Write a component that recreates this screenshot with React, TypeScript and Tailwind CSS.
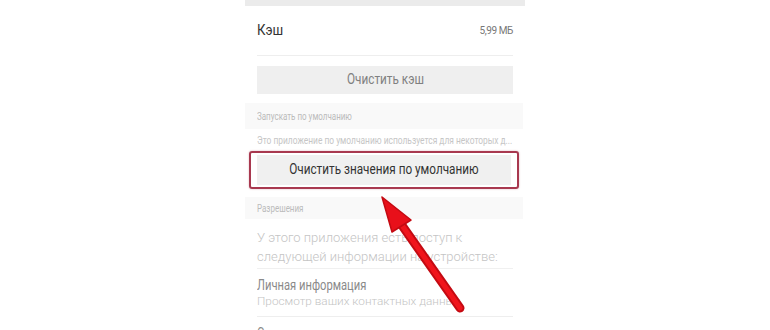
import React from "react";

export default function App() {
  const f = { fontFamily: "Roboto, 'Noto Sans', sans-serif" };
  return (
    <div className="relative w-[770px] h-[330px] overflow-hidden bg-white" style={f}>
      <div className="mx-auto w-[280px] flex flex-col">
        <div className="h-[6px] bg-[#ebebeb]" />
        <div className="h-[49px] flex items-center justify-between px-3">
          <span className="inline-block origin-left scale-x-[0.88] text-[15px] text-[#333]">Кэш</span>
          <span className="text-[10px] text-[#777] tracking-[-0.4px]">5,99 МБ</span>
        </div>
        <div className="mx-3 border-t border-[#eeeeee]" />
        <div className="h-[10px]" />
        <div className="mx-3 h-[28px] bg-[#efefef] flex items-center justify-center text-[14.5px] text-[#808080]">
          <span className="inline-block scale-x-[0.81]">Очистить кэш</span>
        </div>
        <div className="h-[9px]" />
        <div className="h-[26px] mr-[2px] bg-[#f9f9f9] flex items-center px-3 text-[10px] text-[#bbbbbb] whitespace-nowrap">
          <span className="inline-block origin-left scale-x-[0.8]">Запускать по умолчанию</span>
        </div>
        <div className="h-[22px] flex items-center px-3 text-[10px] text-[#c6c6c6] whitespace-nowrap">
          <span className="inline-block origin-left scale-x-[0.84]">
            Это приложение по умолчанию используется для некоторых д...
          </span>
        </div>
        <div className="ml-[4px] mr-[6px] h-[38px] border-2 border-[#a8384f] rounded-[3px] px-[6px] py-[2px] shadow-[0_0_2px_rgba(168,56,79,0.4)]">
          <div className="h-full bg-[#f0f0f0] flex items-center justify-center text-[14.5px] text-[#333] whitespace-nowrap">
            <span className="inline-block scale-x-[0.81]">Очистить значения по умолчанию</span>
          </div>
        </div>
        <div className="h-[8px]" />
        <div className="h-[22px] mr-[2px] bg-[#f9f9f9] flex items-center px-3 text-[10px] text-[#bbbbbb] whitespace-nowrap">
          <span className="inline-block origin-left scale-x-[0.8]">Разрешения</span>
        </div>
        <div className="px-3 pt-[9px] pb-[2px] text-[13px] leading-[19px] font-light text-[#c4c4c4] whitespace-nowrap">
          У этого приложения есть доступ к<br />следующей информации на устройстве:
        </div>
        <div className="mx-3 border-t border-[#f0f0f0]" />
        <div className="px-3 pt-[8px] text-[14px] leading-[17px] text-[#8a8a8a] whitespace-nowrap">
          <span className="inline-block origin-left scale-x-[0.8]">Личная информация</span>
        </div>
        <div className="px-3 text-[11.8px] leading-[14px] font-light text-[#c4c4c4] whitespace-nowrap">
          Просмотр ваших контактных данных
        </div>
        <div className="mx-3 mt-[8px] border-t border-[#eeeeee]" />
        <div className="px-3 pt-[8px] text-[14px] leading-[17px] text-[#8a8a8a]">
          <span className="inline-block origin-left scale-x-[0.8]">Сеть</span>
        </div>
      </div>
      <svg className="absolute left-0 top-0" width="770" height="330" viewBox="0 0 770 330">
        <line x1="401" y1="224" x2="460" y2="308" stroke="#c40a12" strokeWidth="9" strokeLinecap="round" />
        <line x1="401" y1="224" x2="460" y2="308" stroke="#f0141c" strokeWidth="5" strokeLinecap="round" />
        <polygon points="382,197 411,220 392,232" fill="#e8101a" stroke="#c40a12" strokeWidth="1.5" strokeLinejoin="round" />
      </svg>
    </div>
  );
}
